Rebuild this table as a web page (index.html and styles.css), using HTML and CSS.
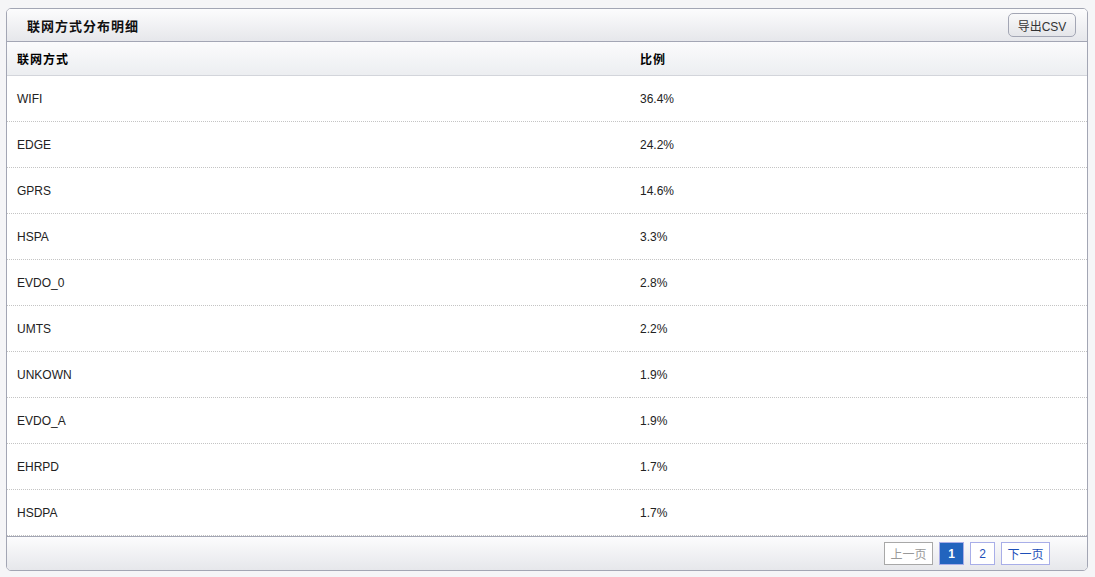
FILE: index.html
```html
<!DOCTYPE html>
<html lang="zh-CN">
<head>
    <meta charset="UTF-8">
    <title>联网方式分布明细</title>
    <link rel="stylesheet" href="styles.css">
</head>
<body>
    <div class="panel">
        <div class="panel-head">
            <h3>联网方式分布明细</h3>
            <button class="btn-export">导出CSV</button>
        </div>
        <table class="data-table">
            <thead>
                <tr><th class="col-name">联网方式</th><th>比例</th></tr>
            </thead>
            <tbody>
                <tr><td>WIFI</td><td>36.4%</td></tr>
                <tr><td>EDGE</td><td>24.2%</td></tr>
                <tr><td>GPRS</td><td>14.6%</td></tr>
                <tr><td>HSPA</td><td>3.3%</td></tr>
                <tr><td>EVDO_0</td><td>2.8%</td></tr>
                <tr><td>UMTS</td><td>2.2%</td></tr>
                <tr><td>UNKOWN</td><td>1.9%</td></tr>
                <tr><td>EVDO_A</td><td>1.9%</td></tr>
                <tr><td>EHRPD</td><td>1.7%</td></tr>
                <tr><td>HSDPA</td><td>1.7%</td></tr>
            </tbody>
        </table>
        <div class="panel-foot">
            <div class="pager">
                <span class="page wide disabled">上一页</span>
                <span class="page current">1</span>
                <a class="page" href="#">2</a>
                <a class="page wide" href="#">下一页</a>
            </div>
        </div>
    </div>
</body>
</html>
```

FILE: styles.css
```css
body {
    margin: 0;
    padding: 8px 6px 0 6px;
    background: #f5f5f7;
    font-family: "Liberation Sans", Arial, "Noto Sans CJK SC", sans-serif;
    font-size: 12px;
    color: #222;
}
.panel {
    width: 1080px;
    border: 1px solid #a3a6b4;
    border-radius: 5px;
    background: #fff;
    overflow: hidden;
}
.panel-head {
    height: 32px;
    display: flex;
    align-items: center;
    justify-content: space-between;
    padding: 0 11px 0 20px;
    background: linear-gradient(#fcfcfd, #e6e7eb);
    border-bottom: 1px solid #a3a6b4;
}
.panel-head h3 {
    margin: 0;
    font-size: 13px;
    letter-spacing: 1px;
    font-weight: bold;
    color: #111;
}
.btn-export {
    height: 24px;
    width: 68px;
    padding: 0;
    font-family: inherit;
    font-size: 12px;
    color: #333;
    border: 1px solid #a3a6b4;
    border-radius: 5px;
    background: linear-gradient(#f9f9fa, #e4e5e9);
    cursor: pointer;
}
.data-table {
    width: 100%;
    border-collapse: collapse;
}
.data-table th {
    height: 33px;
    padding: 0 10px;
    text-align: left;
    font-weight: bold;
    letter-spacing: 1px;
    color: #000;
    background: linear-gradient(#fbfbfc, #eceef1);
    border-bottom: 1px solid #d3d5db;
}
.data-table .col-name {
    width: 603px;
}
.data-table td {
    height: 45px;
    padding: 0 10px;
    color: #222;
    border-bottom: 1px dotted #c4c4c4;
}
.panel-foot {
    height: 33px;
    display: flex;
    align-items: center;
    justify-content: flex-end;
    padding-right: 37px;
    border-top: 1px solid #a3a6b4;
    background: linear-gradient(#fcfcfd, #e6e7eb);
}
.pager {
    display: flex;
    gap: 6px;
}
.page {
    width: 25px;
    height: 23px;
    box-sizing: border-box;
    display: flex;
    align-items: center;
    justify-content: center;
    white-space: nowrap;
    border: 1px solid #a8aee8;
    background: #fff;
    color: #1d4fb8;
    text-decoration: none;
    font-size: 12px;
}
.page.wide {
    width: 49px;
}
.page.disabled {
    border-color: #a8a8a8;
    color: #999;
}
.page.current {
    background: #2264be;
    color: #fff;
    font-weight: bold;
}
```
